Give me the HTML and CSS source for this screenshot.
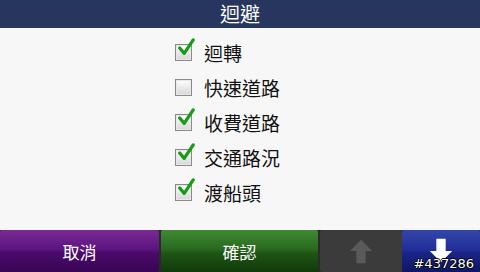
FILE: index.html
```html
<!DOCTYPE html>
<html lang="zh-Hant">
<head>
<meta charset="utf-8">
<link rel="stylesheet" href="styles.css">
</head>
<body>
<div class="screen">
  <header class="title">迴避</header>
  <main class="list">
    <div class="row"><span class="box checked"><svg class="tick" viewBox="0 0 20 20"><path d="M3 10 L8 16 L18 1" fill="none" stroke="#1a9a1a" stroke-width="3.6" stroke-linecap="round" stroke-linejoin="round"/></svg></span><span class="label">迴轉</span></div>
    <div class="row"><span class="box"></span><span class="label">快速道路</span></div>
    <div class="row"><span class="box checked"><svg class="tick" viewBox="0 0 20 20"><path d="M3 10 L8 16 L18 1" fill="none" stroke="#1a9a1a" stroke-width="3.6" stroke-linecap="round" stroke-linejoin="round"/></svg></span><span class="label">收費道路</span></div>
    <div class="row"><span class="box checked"><svg class="tick" viewBox="0 0 20 20"><path d="M3 10 L8 16 L18 1" fill="none" stroke="#1a9a1a" stroke-width="3.6" stroke-linecap="round" stroke-linejoin="round"/></svg></span><span class="label">交通路況</span></div>
    <div class="row"><span class="box checked"><svg class="tick" viewBox="0 0 20 20"><path d="M3 10 L8 16 L18 1" fill="none" stroke="#1a9a1a" stroke-width="3.6" stroke-linecap="round" stroke-linejoin="round"/></svg></span><span class="label">渡船頭</span></div>
  </main>
  <footer class="bar">
    <div class="btn cancel">取消</div>
    <div class="btn ok">確認</div>
    <div class="btn up"><svg viewBox="0 0 30 30" class="arrow"><path d="M15 3 L27 15 L20 15 L20 28 L10 28 L10 15 L3 15 Z" fill="#5a5a5a"/></svg></div>
    <div class="btn down"><svg viewBox="0 0 30 30" class="arrow"><path d="M10 2 L20 2 L20 15 L27 15 L15 27 L3 15 L10 15 Z" fill="#ffffff"/></svg><span class="tag">#437286</span></div>
  </footer>
</div>
</body>
</html>
```

FILE: styles.css
```css
html, body {
  margin: 0;
  padding: 0;
  background: #f7f7f7;
}
.screen {
  width: 480px;
  height: 272px;
  display: flex;
  flex-direction: column;
  overflow: hidden;
  font-family: "Noto Sans CJK TC", "Noto Sans", sans-serif;
}
.title {
  height: 28px;
  background: #27365e;
  color: #ffffff;
  font-size: 20px;
  line-height: 28px;
  text-align: center;
  flex: none;
}
.list {
  flex: 1;
  background: #f7f7f7;
  display: flex;
  flex-direction: column;
  padding: 7px 0 0 175px;
}
.row {
  height: 35px;
  display: flex;
  align-items: center;
  gap: 12px;
}
.box {
  position: relative;
  width: 15px;
  height: 15px;
  border: 1px solid #8a8a8a;
  background: linear-gradient(#ffffff, #d6d6d6);
  box-shadow: inset 0 0 0 1px #e8e8e8;
  flex: none;
}
.tick {
  position: absolute;
  left: 1px;
  top: -8px;
  width: 18px;
  height: 22px;
}
.label {
  font-size: 19px;
  color: #111111;
  line-height: 24px;
}
.bar {
  height: 42px;
  display: flex;
  background: #2a2a2a;
  flex: none;
}
.btn {
  height: 42px;
  display: flex;
  align-items: center;
  justify-content: center;
  color: #ffffff;
  font-size: 17px;
  position: relative;
  border-radius: 2px;
}
.cancel {
  width: 159px;
  background: linear-gradient(#7a2a92 0%, #5d1580 45%, #4a0a6a 55%, #3a0555 100%);
}
.ok {
  width: 157px;
  margin-left: 2px;
  background: linear-gradient(#3e8a32 0%, #2a6a20 45%, #1e5614 55%, #103a0a 100%);
}
.up {
  width: 82px;
  margin-left: 2px;
  background: #3b3b3b;
}
.down {
  width: 78px;
  background: linear-gradient(#3346a8 0%, #22309a 45%, #1a2486 55%, #0f1666 100%);
}
.arrow {
  width: 28px;
  height: 28px;
}
.tag {
  position: absolute;
  right: 6px;
  bottom: 1px;
  font-family: "DejaVu Sans", sans-serif;
  font-size: 13px;
  color: #ffffff;
  text-shadow: 1px 0 0 #000, -1px 0 0 #000, 0 1px 0 #000, 0 -1px 0 #000;
}
```
